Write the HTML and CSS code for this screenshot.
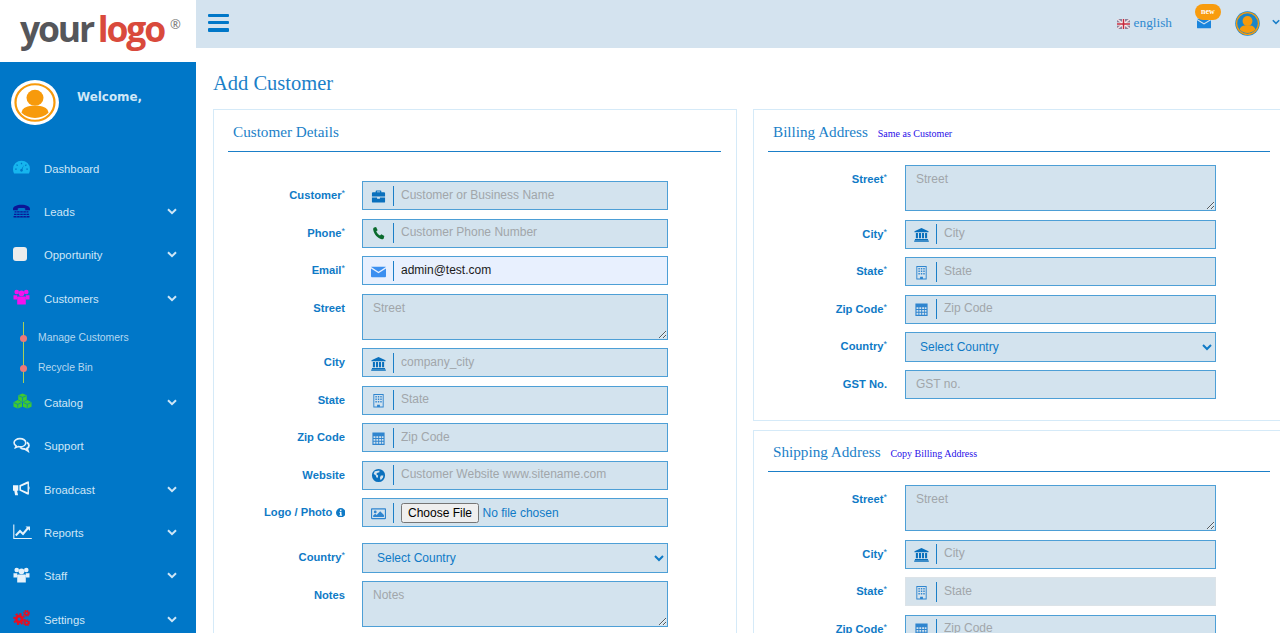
FILE: index.html
```html
<!DOCTYPE html>
<html lang="en">
<head>
<meta charset="utf-8">
<title>Add Customer</title>
<link rel="stylesheet" href="styles.css">
</head>
<body>
<svg class="defs" width="0" height="0" aria-hidden="true">
  <defs>
    <symbol id="i-case" viewBox="0 0 16 16"><path d="M5 3.5V2.2C5 1.7 5.400 1.500 5.800 1.500h4.400c.4 0 .8.2.8.7v1.300h3c.6 0 1 .4 1 1V8H1V4.500c0-.6.4-1 1-1zM6.300 3.500h3.400v-.8H6.300zM1 9h5.500v1.300h3V9H15v4.500c0 .6-.4 1-1 1H2c-.6 0-1-.4-1-1z"/></symbol>
    <symbol id="i-phone" viewBox="0 0 16 16"><path d="M3.200 1.500 5.400 1l1.700 3.400-1.500 1.300c.7 1.700 2.300 3.600 4 4.400l1.400-1.400 3.200 2-.6 2.300c-.3.800-1.200 1.300-2.100 1C7 13 3.500 9.300 2.400 4.300c-.2-1.200 0-2.300.8-2.800z"/></symbol>
    <symbol id="i-mail" viewBox="0 0 16 16"><path d="M1 3h14c.4 0 .6.1.8.3L8 8.300.2 3.300C.4 3.100.6 3 1 3zM0 4.800l8 5 8-5V13c0 .6-.4 1-1 1H1c-.6 0-1-.4-1-1z"/></symbol>
    <symbol id="i-bank" viewBox="0 0 16 16"><path d="M8 1 15.500 4.500V5.500H.5V4.500zM2 6.500h2.200v5.500H2zM5.300 6.500h2.200v5.500H5.300zM8.500 6.500h2.200v5.500H8.500zM11.800 6.500H14v5.500h-2.200zM1 12.800h14V14H1zM.2 14.500h15.600V15.700H.2z"/></symbol>
    <symbol id="i-building" viewBox="0 0 16 16"><path fill-rule="evenodd" d="M2.500 1h11v14.500h-11zM3.500 2v12.500h3v-2h3v2h3V2zM4.700 3.200h1.500v1.500H4.700zM7.300 3.200h1.500v1.500H7.300zM9.900 3.200h1.500v1.500H9.900zM4.700 5.900h1.500v1.500H4.700zM7.300 5.900h1.500v1.500H7.300zM9.900 5.900h1.500v1.500H9.900zM4.700 8.600h1.500v1.500H4.700zM7.300 8.600h1.500v1.500H7.300zM9.900 8.600h1.500v1.500H9.900z"/></symbol>
    <symbol id="i-calc" viewBox="0 0 16 16"><path fill-rule="evenodd" d="M1.500 1.500h13v13.500h-13zM2.700 5.500v2h2v-2zM5.700 5.500v2h2v-2zM8.700 5.500v2h2v-2zM11.500 5.500v2h1.800v-2zM2.700 8.500v2h2v-2zM5.700 8.500v2h2v-2zM8.700 8.500v2h2v-2zM11.500 8.500v2h1.800v-2zM2.700 11.500v2h2v-2zM5.700 11.500v2h2v-2zM8.700 11.500v2h2v-2zM11.500 11.500v2h1.800v-2z"/></symbol>
    <symbol id="i-globe" viewBox="0 0 16 16"><path fill-rule="evenodd" d="M8 1a7 7 0 1 1 0 14A7 7 0 0 1 8 1zM4 3.500 2.800 6.500l2.200 1.300.8 2.200 1.500.4.300-2.400L5.500 6.500 7 5l2-.5V2.600zM10.500 8l-1 2.500.8 2.500 2.400-2.500.5-2.500z"/></symbol>
    <symbol id="i-image" viewBox="0 0 16 16"><path fill-rule="evenodd" d="M1 2.500h14c.5 0 1 .4 1 1v9.500c0 .5-.5 1-1 1H1c-.5 0-1-.5-1-1V3.500c0-.6.5-1 1-1zM1.200 3.700v9h13.600v-9zM4.500 4.800a1.500 1.500 0 1 1 0 3 1.500 1.500 0 0 1 0-3zM2.300 11.800V10l2.200-1.800 1.500 1.300 3.800-4 4 4v2.300z"/></symbol>
    <symbol id="i-chev" viewBox="0 0 10 7"><path d="M1 1.300 5 5.200 9 1.300" fill="none" stroke="currentColor" stroke-width="2"/></symbol>
    <symbol id="i-team" viewBox="0 0 16 16"><circle cx="3.200" cy="3" r="2.300"/><circle cx="12.800" cy="3" r="2.300"/><circle cx="8" cy="4.300" r="2.900"/><path d="M0 6.200h3.800L3.500 10.500H0zM12.200 6.200H16v4.300h-3.500zM4.500 7.500h7c.5 0 .8.400.8.800v7.200H3.700V8.300c0-.4.300-.8.800-.8z"/></symbol>
    <symbol id="i-user" viewBox="0 0 48 48" preserveAspectRatio="none"><circle cx="24" cy="24" r="24" fill="#fff"/><circle cx="24" cy="24" r="19.500" fill="#fff" stroke="#f79a0b" stroke-width="2.200"/><circle cx="24" cy="19" r="8.500" fill="#f79a0b"/><path d="M10.500 35c1-6 6-7.500 13.500-7.500S36.500 29 37.500 35c-3.500 3.500-8 5.500-13.500 5.500S14 38.500 10.500 35z" fill="#f79a0b"/></symbol>
  </defs>
</svg>

<aside class="sidebar">
  <div class="brand">
    <span class="logo"><span class="logo-your">your</span> <span class="logo-logo">logo</span><span class="logo-reg">®</span></span>
  </div>
  <div class="profile">
    <svg class="profile-pic"><use href="#i-user"/></svg>
    <span class="welcome">Welcome,</span>
  </div>
  <nav class="nav">
    <a class="nav-item">
      <svg class="nav-icon" viewBox="0 0 16 14" fill="#16b5ee"><path fill-rule="evenodd" d="M8 1a8 8 0 0 1 8 8c0 1.500-.4 2.800-1 4H1C.4 11.800 0 10.500 0 9a8 8 0 0 1 8-8zM7.400 3v1.500h1.200V3zM3.800 4.300l-.9.800 1 1 .9-.8zM12.200 4.300l-1 1 .8.900 1-1zM2 8.500v1.200h1.500V8.500zM12.500 8.500v1.200H14V8.500zM10.300 5 8 8.800c-.8 0-1.300.6-1.300 1.300s.6 1.300 1.300 1.300 1.300-.6 1.300-1.300c0-.4-.2-.7-.4-1z"/></svg>
      <span class="nav-label">Dashboard</span>
    </a>
    <a class="nav-item">
      <svg class="nav-icon" viewBox="0 0 16 14" fill="#0b1596"><path d="M0 5C0 2.500 3.500 1 8 1s8 1.500 8 4v1.200h-4.500V4.500c-1-.5-5.500-.5-7 0v1.700H0zM1.500 7.200h13v1.300h-13zM1 9.500h14v1.300H1zM.5 11.800h15V13H.5z"/><path d="M3 7h1v6H3zM6 7h1v6H6zM9 7h1v6H9zM12 7h1v6h-1z" fill="#0077c8" opacity=".6"/></svg>
      <span class="nav-label">Leads</span>
      <svg class="nav-chev"><use href="#i-chev"/></svg>
    </a>
    <a class="nav-item">
      <span class="nav-square"></span>
      <span class="nav-label">Opportunity</span>
      <svg class="nav-chev"><use href="#i-chev"/></svg>
    </a>
    <a class="nav-item">
      <svg class="nav-icon nav-team-pink"><use href="#i-team"/></svg>
      <span class="nav-label">Customers</span>
      <svg class="nav-chev"><use href="#i-chev"/></svg>
    </a>
    <ul class="subnav">
      <li class="sub-item">Manage Customers</li>
      <li class="sub-item">Recycle Bin</li>
    </ul>
    <a class="nav-item">
      <svg class="nav-icon nav-icon-wide" viewBox="0 0 20 16" fill="#3fcb30"><path d="M10 0 14.500 2V6.800L10 9 5.500 6.800V2zM5 7 9.500 9.200V14L5 16 .5 14V9.200zM15 7 19.500 9.200V14L15 16 10.500 14V9.200z"/><path d="M6 2.500 10 4.200l4-1.700M10 4.200v4M1 9.700 5 11.500 9 9.700M5 11.500v4M11 9.700 15 11.500 19 9.700M15 11.500v4" fill="none" stroke="#0077c8" stroke-width=".7"/></svg>
      <span class="nav-label">Catalog</span>
      <svg class="nav-chev"><use href="#i-chev"/></svg>
    </a>
    <a class="nav-item">
      <svg class="nav-icon" viewBox="0 0 16 14" fill="none" stroke="#e6f2fa" stroke-width="1.500"><path d="M6.500 1C3.400 1 1 2.700 1 4.800c0 1.200.8 2.300 2 3L2.300 9.500 5 8.500c.5.100 1 .2 1.500.2 3.100 0 5.500-1.700 5.500-3.900S9.600 1 6.500 1z"/><path d="M13 4.500c1.300.7 2 1.800 2 2.900 0 1.100-.7 2.100-1.800 2.800l.8 2.300-3-1.700c-1.800 0-3.300-.6-4.300-1.600" stroke-width="1.800"/></svg>
      <span class="nav-label">Support</span>
    </a>
    <a class="nav-item">
      <svg class="nav-icon" viewBox="0 0 16 14" fill="#eef6fb"><path d="M0 4.500h5V9.500H3.800l1 4.300H2L1.200 9.500H0zM6 4.300 13.500.8H15v12.400h-1.500L6 9.400zM13.700 3 7.500 5.500v2.800l6.200 2.700zM15.500 5.300c.7.600.7 2.700 0 3.300z"/></svg>
      <span class="nav-label">Broadcast</span>
      <svg class="nav-chev"><use href="#i-chev"/></svg>
    </a>
    <a class="nav-item">
      <svg class="nav-icon nav-icon-wide" viewBox="0 0 19 15" fill="none" stroke="#e6f2fa"><path d="M.8 0v14h18" stroke-width="1.100"/><path d="M2.800 11 7 6.500l3 3 5-6" stroke-width="2"/><path d="M12.500 2H17v4.500z" fill="#e6f2fa" stroke="none"/></svg>
      <span class="nav-label">Reports</span>
      <svg class="nav-chev"><use href="#i-chev"/></svg>
    </a>
    <a class="nav-item">
      <svg class="nav-icon nav-team-white"><use href="#i-team"/></svg>
      <span class="nav-label">Staff</span>
      <svg class="nav-chev"><use href="#i-chev"/></svg>
    </a>
    <a class="nav-item">
      <svg class="nav-icon" viewBox="0 0 16 15" fill="none" stroke="#ec0b1d"><circle cx="5.800" cy="8.500" r="2.800" stroke-width="2.600"/><circle cx="5.800" cy="8.500" r="4.900" stroke-width="1.500" stroke-dasharray="2 1.800"/><circle cx="12.800" cy="3" r="1.700" stroke-width="1.400"/><circle cx="12.800" cy="3" r="2.800" stroke-width="1" stroke-dasharray="1.200 1"/><circle cx="12.800" cy="12" r="1.700" stroke-width="1.400"/><circle cx="12.800" cy="12" r="2.800" stroke-width="1" stroke-dasharray="1.200 1"/></svg>
      <span class="nav-label">Settings</span>
      <svg class="nav-chev"><use href="#i-chev"/></svg>
    </a>
  </nav>
</aside>

<div class="main">
  <header class="topbar">
    <button class="menu-btn" type="button" aria-label="Menu"><span></span><span></span><span></span></button>
    <div class="topbar-right">
      <span class="lang">
        <svg class="flag" viewBox="0 0 13 10"><rect width="13" height="10" fill="#8a7f99"/><path d="M0 0 13 10M13 0 0 10" stroke="#f0dfe2" stroke-width="1.500"/><path d="M6.500 0v10M0 5h13" stroke="#fff" stroke-width="3"/><path d="M6.500 0v10M0 5h13" stroke="#c5283d" stroke-width="1.600"/></svg>
        <span>english</span>
      </span>
      <span class="mail">
        <svg class="mail-icon" fill="#1a85dd"><use href="#i-mail"/></svg>
        <span class="badge">new</span>
      </span>
      <svg class="top-avatar" viewBox="0 0 48 48"><circle cx="24" cy="24" r="23.500" fill="#1a85c9"/><circle cx="24" cy="24" r="21" fill="#1a85c9" stroke="#f79a0b" stroke-width="2.500"/><circle cx="24" cy="19" r="9.500" fill="#f79a0b"/><path d="M9 36c1-6 6-8.500 15-8.500S38 30 39 36c-3.500 4-9 6-15 6S12.500 40 9 36z" fill="#f79a0b"/></svg>
      <svg class="top-chev"><use href="#i-chev"/></svg>
    </div>
  </header>

  <div class="content">
    <h1 class="page-title">Add Customer</h1>
    <div class="columns">
      <section class="panel panel-left">
        <h2 class="panel-title">Customer Details</h2>
        <form class="form form-left">
          <div class="row"><label class="lbl">Customer<sup>*</sup></label><div class="group"><span class="addon"><svg class="ic ic-blue"><use href="#i-case"/></svg></span><input class="field" placeholder="Customer or Business Name"></div></div>
          <div class="row"><label class="lbl">Phone<sup>*</sup></label><div class="group"><span class="addon"><svg class="ic ic-green"><use href="#i-phone"/></svg></span><input class="field" placeholder="Customer Phone Number"></div></div>
          <div class="row"><label class="lbl">Email<sup>*</sup></label><div class="group group-filled"><span class="addon"><svg class="ic ic-mail"><use href="#i-mail"/></svg></span><input class="field" value="admin@test.com"></div></div>
          <div class="row"><label class="lbl">Street</label><textarea class="area" placeholder="Street"></textarea></div>
          <div class="row"><label class="lbl">City</label><div class="group"><span class="addon"><svg class="ic ic-blue"><use href="#i-bank"/></svg></span><input class="field" placeholder="company_city"></div></div>
          <div class="row"><label class="lbl">State</label><div class="group"><span class="addon"><svg class="ic ic-light"><use href="#i-building"/></svg></span><input class="field" placeholder="State"></div></div>
          <div class="row"><label class="lbl">Zip Code</label><div class="group"><span class="addon"><svg class="ic ic-light"><use href="#i-calc"/></svg></span><input class="field" placeholder="Zip Code"></div></div>
          <div class="row"><label class="lbl">Website</label><div class="group"><span class="addon"><svg class="ic ic-blue"><use href="#i-globe"/></svg></span><input class="field" placeholder="Customer Website www.sitename.com"></div></div>
          <div class="row"><label class="lbl">Logo / Photo <svg class="info" viewBox="0 0 16 16"><path fill-rule="evenodd" fill="currentColor" d="M8 0a8 8 0 1 1 0 16A8 8 0 0 1 8 0zM6.800 2.500v2.500h2.400V2.500zM5.800 6.500v1.500h1v3.500h-1V13h4.400v-1.500h-1v-5z"/></svg></label><div class="group"><span class="addon"><svg class="ic ic-light"><use href="#i-image"/></svg></span><input class="file" type="file"></div></div>
          <div class="row row-gap"><label class="lbl">Country<sup>*</sup></label><select class="select"><option>Select Country</option></select></div>
          <div class="row"><label class="lbl">Notes</label><textarea class="area" placeholder="Notes"></textarea></div>
        </form>
      </section>

      <div class="stack">
        <section class="panel panel-billing">
          <h2 class="panel-title">Billing Address <a class="panel-link">Same as Customer</a></h2>
          <form class="form form-right">
            <div class="row"><label class="lbl">Street<sup>*</sup></label><textarea class="area" placeholder="Street"></textarea></div>
            <div class="row"><label class="lbl">City<sup>*</sup></label><div class="group"><span class="addon"><svg class="ic ic-blue"><use href="#i-bank"/></svg></span><input class="field" placeholder="City"></div></div>
            <div class="row"><label class="lbl">State<sup>*</sup></label><div class="group"><span class="addon"><svg class="ic ic-light"><use href="#i-building"/></svg></span><input class="field" placeholder="State"></div></div>
            <div class="row"><label class="lbl">Zip Code<sup>*</sup></label><div class="group"><span class="addon"><svg class="ic ic-light"><use href="#i-calc"/></svg></span><input class="field" placeholder="Zip Code"></div></div>
            <div class="row"><label class="lbl">Country<sup>*</sup></label><select class="select"><option>Select Country</option></select></div>
            <div class="row"><label class="lbl">GST No.</label><input class="plain" placeholder="GST no."></div>
          </form>
        </section>
        <section class="panel panel-shipping">
          <h2 class="panel-title">Shipping Address <a class="panel-link panel-link-far">Copy Billing Address</a></h2>
          <form class="form form-right">
            <div class="row"><label class="lbl">Street<sup>*</sup></label><textarea class="area" placeholder="Street"></textarea></div>
            <div class="row"><label class="lbl">City<sup>*</sup></label><div class="group"><span class="addon"><svg class="ic ic-blue"><use href="#i-bank"/></svg></span><input class="field" placeholder="City"></div></div>
            <div class="row"><label class="lbl">State<sup>*</sup></label><div class="group group-disabled"><span class="addon"><svg class="ic ic-light"><use href="#i-building"/></svg></span><input class="field" placeholder="State" disabled></div></div>
            <div class="row"><label class="lbl">Zip Code<sup>*</sup></label><div class="group"><span class="addon"><svg class="ic ic-light"><use href="#i-calc"/></svg></span><input class="field" placeholder="Zip Code"></div></div>
          </form>
        </section>
      </div>
    </div>
  </div>
</div>
</body>
</html>
```
FILE: styles.css
```css
* { box-sizing: border-box; }
html, body { height: 100%; }
body {
  margin: 0;
  height: 633px;
  overflow: hidden;
  display: flex;
  background: #fff;
  font-family: "Liberation Sans", Arial, sans-serif;
  font-size: 12px;
  color: #0077c8;
}
.defs { display: block; width: 0; height: 0; overflow: hidden; flex: none; }

/* sidebar */
.sidebar { width: 196px; flex: none; display: flex; flex-direction: column; background: #0077c8; overflow: hidden; }
.brand { height: 62px; background: #fff; display: flex; align-items: center; padding: 0 0 0 20px; flex: none; overflow: hidden; }
.logo { font-family: "Open Sans", sans-serif; font-size: 35.500px; font-weight: 700; letter-spacing: -2.200px; word-spacing: -2px; line-height: 1; white-space: nowrap; display: block; margin-top: -5px; }
.logo-your { color: #55565a; }
.logo-logo { color: #d94a3c; }
.logo-reg { color: #777; font-size: 13px; letter-spacing: 0; vertical-align: 13px; margin-left: 6px; font-weight: 400; }
.profile { height: 85px; flex: none; display: flex; align-items: flex-start; padding: 18px 0 0 10.500px; }
.profile-pic { width: 48px; height: 45px; flex: none; }
.welcome { font-family: "DejaVu Sans", sans-serif; font-weight: 700; font-size: 11.900px; color: #cfe7f7; margin: 9.500px 0 0 18.500px; }
.nav { display: flex; flex-direction: column; }
.nav-item { height: 43.400px; flex: none; display: flex; align-items: center; padding: 0 19px 0 13px; color: #cfe6f6; position: relative; }
.nav-icon { width: 17px; height: 16px; flex: none; margin-top: -3px; }
.nav-team-pink { fill: #f412ee; }
.nav-team-white { fill: #e6f2fa; }
.nav-icon-wide { width: 19px; margin-right: -2px; }
.nav-square { width: 14px; height: 14px; flex: none; margin: -3px 3px 0 0; background: #ececec; border-radius: 3px; }
.nav-label { margin-left: 14px; font-size: 11.300px; flex: 1; }
.nav-chev { width: 10px; height: 7px; flex: none; color: #cfe6f6; margin: -1px 0 0; }
.subnav { list-style: none; margin: 1.500px 0 -1.500px 23px; padding: 0; height: 60.600px; border-left: 1px solid #a9cf57; flex: none; }
.sub-item { height: 30.400px; display: flex; align-items: center; padding-left: 14px; font-size: 10.400px; color: #b5d8f0; position: relative; }
.sub-item::before { content: ""; position: absolute; left: -4px; top: 12.500px; width: 7px; height: 7px; border-radius: 50%; background: #ef7878; }

/* top bar */
.main { flex: 1; min-width: 0; display: flex; flex-direction: column; }
.topbar { height: 48px; flex: none; background: #d4e3ef; display: flex; align-items: center; padding: 0 0 0 12px; }
.menu-btn { width: 21px; height: 18px; padding: 0; margin: -3px 0 0; border: 0; background: none; display: flex; flex-direction: column; justify-content: space-between; }
.menu-btn span { display: block; height: 3.500px; background: #0077c8; border-radius: 1px; }
.topbar-right { margin-left: auto; display: flex; align-items: center; height: 100%; }
.lang { display: flex; align-items: center; gap: 4px; font-family: "Liberation Serif", serif; font-size: 13.300px; color: #2f8ad0; margin: -3px 25px 0 0; }
.flag { width: 13px; height: 10px; flex: none; margin-top: 2px; }
.mail { position: relative; width: 14px; height: 12px; margin: -3px 24px 0 0; }
.mail-icon { width: 14px; height: 14px; display: block; margin-top: -1px; }
.badge { position: absolute; left: -2px; top: -13px; width: 26px; height: 16px; border-radius: 8px; background: #f89c0e; color: #fff; font: 700 8px/16px "Liberation Serif", serif; text-align: center; }
.top-avatar { width: 25px; height: 25px; flex: none; margin: -1px 0 0; }
.top-chev { width: 8px; height: 6px; flex: none; color: #1b7fc8; margin: -4px 0 0 12px; }

/* content */
.content { padding: 0 0 0 17px; width: 1100px; }
.page-title { font-family: "Liberation Serif", serif; font-weight: 400; font-size: 20.500px; line-height: 24px; color: #1b7fc8; margin: 23px 0 14px; }
.columns { display: flex; gap: 16px; align-items: flex-start; }
.panel { border: 1px solid #d5eaf8; padding: 0 15px 0 14px; background: #fff; }
.panel-left { width: 524px; flex: none; height: 600px; }
.stack { width: 533px; flex: none; display: flex; flex-direction: column; gap: 9px; }
.panel-billing { height: 312px; }
.panel-title { font-family: "Liberation Serif", serif; font-weight: 400; font-size: 15.200px; line-height: 18px; color: #1b7fc8; margin: 0; padding: 13px 0 9px 5px; height: 42px; border-bottom: 1.500px solid #1b7fc8; white-space: nowrap; }
.panel-link { font-size: 10px; color: #2a10e8; margin-left: 6px; }
.panel-link-far { margin-left: 6px; }
.panel-shipping .panel-title { padding-top: 12px; height: 41px; }

/* form */
.form { display: flex; flex-direction: column; gap: 8.500px; }
.form-left { padding-top: 29px; }
.form-right { padding-top: 13px; }
.row { display: flex; align-items: flex-start; }
.row-gap { margin-top: 7.500px; }
.lbl { flex: none; text-align: right; font-weight: 700; font-size: 11.200px; line-height: 14px; color: #0f7ac6; padding-top: 7px; white-space: nowrap; }
.lbl sup { font-weight: 400; font-size: 9px; line-height: 0; vertical-align: 3px; }
.form-left .lbl { width: 117px; margin-right: 17px; }
.form-right .lbl { width: 119px; margin-right: 18px; }
.form-left .group, .form-left .area, .form-left .select { width: 306px; }
.form-right .group, .form-right .area, .form-right .select, .form-right .plain { width: 311px; }
.group { height: 29px; display: flex; align-items: center; background: #d3e3ee; border: 1px solid #4d9fd6; }
.group-filled { background: #e8f0fe; }
.group-disabled { background: #d6e3ec; border-color: #dce3e8; }
.addon { width: 31px; height: 20px; flex: none; display: flex; align-items: center; justify-content: center; border-right: 1px solid #1b7fc8; padding-left: 1px; }
.ic { width: 15px; height: 15px; display: block; margin-top: 1px; }
.ic-blue { fill: #0a70bd; }
.ic-green { fill: #0b6b2e; }
.ic-mail { fill: #3b8ff0; }
.ic-light { fill: #2f85cf; }
.field { flex: 1; min-width: 0; height: 100%; border: 0; outline: 0; background: transparent; padding: 0 0 2px 7px; font-family: inherit; font-size: 12px; color: #1a1a1a; }
.field::placeholder, .area::placeholder, .plain::placeholder { color: #a1a6aa; opacity: 1; }
.area { height: 46px; display: block; background: #d3e3ee; border: 1px solid #4d9fd6; border-radius: 0; outline: 0; padding: 6px 10px; font-family: inherit; font-size: 12px; margin: 0; resize: vertical; }
.plain { height: 29px; background: #d3e3ee; border: 1px solid #4d9fd6; outline: 0; padding: 0 0 2px 10px; font-family: inherit; font-size: 12px; }
.select { height: 29.500px; background: #d3e3ee; border: 1px solid #4d9fd6; border-radius: 0; outline: 0; padding: 0 0 0 10px; font-family: inherit; font-size: 12px; color: #0f7ac6; margin: 0; }
.file { flex: 1; min-width: 0; margin-left: 7px; font-family: inherit; font-size: 12px; color: #0f7ac6; }
.file::file-selector-button { font-size: 12px; margin-right: 3.500px; padding: 1px 5px; }
.info { width: 9.500px; height: 9.500px; vertical-align: -1px; }
```
